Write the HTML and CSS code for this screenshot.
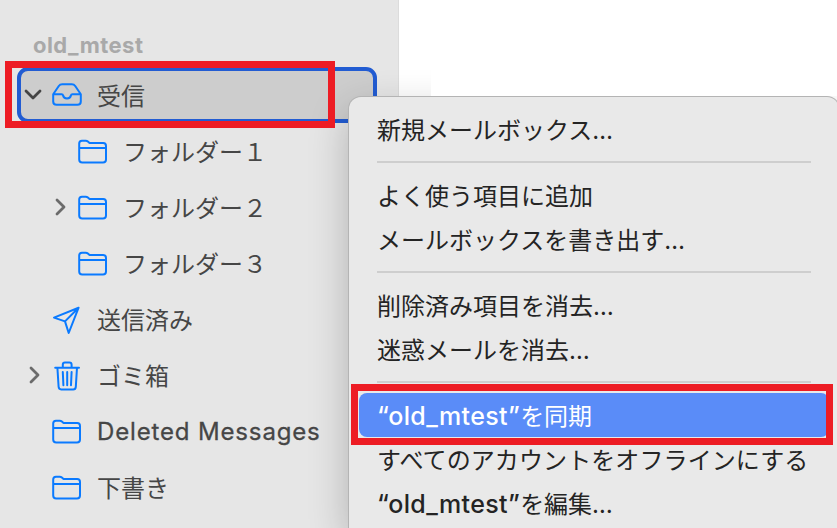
FILE: index.html
```html
<!DOCTYPE html>
<html lang="ja">
<head>
    <meta charset="UTF-8">
    <meta name="viewport" content="width=device-width, initial-scale=1.0">
    <title>メールボックス</title>
    <link rel="stylesheet" href="styles.css">
</head>
<body>

    <svg class="symbols" width="0" height="0">
        <symbol id="folder" viewBox="0 0 30 26">
            <path d="M1.2 20.5V4.5Q1.2 1.7 4 1.7H7.7Q9 1.7 9.9 2.5L10.9 3.4Q11.7 4.1 12.9 4.1H25.2Q28 4.1 28 7.1V20.5Q28 23.4 25 23.4H4.2Q1.2 23.4 1.2 20.5ZM1.2 9H28"/>
        </symbol>
        <symbol id="chevron" viewBox="0 0 12 18">
            <path d="M2 2L9 9L2 16"/>
        </symbol>
    </svg>

    <div class="sidebar">
        <h2 class="account">old_mtest</h2>
        <ul class="mailboxes">
            <li class="mailbox selected">
                <svg class="arrow open"><use href="#chevron"/></svg>
                <svg class="icon" viewBox="0 0 30 26"><path d="M1.2 12.2L6.8 4Q8 2.2 10.2 2.2H19.8Q22 2.2 23.2 4L28.8 12.2V19.4Q28.8 22.8 25.4 22.8H4.6Q1.2 22.8 1.2 19.4ZM1.2 12.2H9.6Q10.8 12.2 11 13.3Q11.6 16.4 15 16.4Q18.4 16.4 19 13.3Q19.2 12.2 20.4 12.2H28.8"/></svg>
                <span class="label">受信</span>
            </li>
            <li class="mailbox child">
                <svg class="icon"><use href="#folder"/></svg>
                <span class="label">フォルダー１</span>
            </li>
            <li class="mailbox child">
                <svg class="arrow"><use href="#chevron"/></svg>
                <svg class="icon"><use href="#folder"/></svg>
                <span class="label">フォルダー２</span>
            </li>
            <li class="mailbox child">
                <svg class="icon"><use href="#folder"/></svg>
                <span class="label">フォルダー３</span>
            </li>
            <li class="mailbox">
                <svg class="icon tall" viewBox="0 0 30 30"><path d="M26.6 2.7L2 12.6L13 16.4L16.7 28ZM26.6 2.7L13 16.4"/></svg>
                <span class="label">送信済み</span>
            </li>
            <li class="mailbox">
                <svg class="arrow"><use href="#chevron"/></svg>
                <svg class="icon tall" viewBox="0 0 30 30"><path d="M3.2 6.8H27M5.4 6.8L6.6 25.8Q6.8 28.4 9.2 28.4H21.2Q23.6 28.4 23.8 25.8L25 6.8M10.8 6.8V3.8Q10.8 1.6 13 1.6H17.4Q19.6 1.6 19.6 3.8V6.8M10.8 11L11.4 24.2M15.2 11V24.2M19.6 11L19 24.2"/></svg>
                <span class="label">ゴミ箱</span>
            </li>
            <li class="mailbox">
                <svg class="icon"><use href="#folder"/></svg>
                <span class="label-latin">Deleted Messages</span>
            </li>
            <li class="mailbox">
                <svg class="icon"><use href="#folder"/></svg>
                <span class="label">下書き</span>
            </li>
        </ul>
    </div>

    <div class="message"></div>

    <ul class="menu">
        <li class="item">新規メールボックス…</li>
        <li class="separator"></li>
        <li class="item">よく使う項目に追加</li>
        <li class="item">メールボックスを書き出す…</li>
        <li class="separator"></li>
        <li class="item">削除済み項目を消去…</li>
        <li class="item">迷惑メールを消去…</li>
        <li class="separator"></li>
        <li class="item active"><span class="name">“old_mtest”</span>を同期</li>
        <li class="item wide">すべてのアカウントをオフラインにする</li>
        <li class="item"><span class="name">“old_mtest”</span>を編集…</li>
    </ul>

    <div class="marker marker-inbox"></div>
    <div class="marker marker-sync"></div>

</body>
</html>
```

FILE: styles.css
```css
* {
    box-sizing: border-box;
}

body {
    position: relative;
    display: flex;
    width: 837px;
    height: 528px;
    margin: 0;
    overflow: hidden;
    background: #fff;
    font-family: Inter, "Noto Sans CJK JP", sans-serif;
    font-size: 24px;
}

ul {
    margin: 0;
    padding: 0;
    list-style: none;
}

.symbols {
    position: absolute;
}

.sidebar {
    width: 399px;
    height: 528px;
    flex-shrink: 0;
    padding: 30px 22px 0 17px;
    background: #e6e6e6;
    border-right: 1px solid #dcdcdc;
}

.account {
    height: 37px;
    margin: 0;
    padding-left: 16px;
    color: #a9a9a9;
    font-size: 22px;
    font-weight: 700;
    letter-spacing: 0.45px;
    line-height: 30px;
}

.mailbox {
    display: flex;
    align-items: center;
    width: 360px;
    height: 56px;
    padding-left: 35px;
    color: #464646;
    white-space: nowrap;
}

.mailbox.child {
    padding-left: 61px;
}

.mailbox.selected {
    padding-left: 31px;
    background: #cdcdcd;
    border: 4px solid #225cd2;
    border-radius: 11px;
}

.label {
    padding-bottom: 2px;
}

.label-latin {
    padding-top: 1px;
    font-weight: 400;
    letter-spacing: 0.85px;
    -webkit-text-stroke: 0.3px #464646;
}

.name {
    font-size: 25px;
    font-weight: 500;
    letter-spacing: 0.35px;
}

.icon {
    width: 30px;
    height: 26px;
    margin-top: 1px;
    margin-right: 15px;
    flex-shrink: 0;
    fill: none;
    stroke: #0a7aff;
    stroke-width: 2;
    stroke-linejoin: round;
    stroke-linecap: round;
}

.icon.tall {
    height: 30px;
}

.selected .icon {
    margin-top: 0;
}

.arrow {
    width: 12px;
    height: 18px;
    margin-left: -23px;
    margin-right: 11px;
    flex-shrink: 0;
    fill: none;
    stroke: #6b6b6b;
    stroke-width: 2.8;
    stroke-linecap: round;
    stroke-linejoin: round;
}

.arrow.open {
    margin-left: -25px;
    margin-right: 13px;
    stroke: #454545;
    transform: rotate(90deg);
}

/* message pane, hides the menu shadow on the white area */
.message {
    position: relative;
    z-index: 2;
    width: 406px;
    height: 96px;
    margin-left: auto;
    background: #fff;
}

.menu {
    position: absolute;
    z-index: 1;
    left: 349px;
    top: 97px;
    width: 490px;
    height: 431px;
    padding: 10px 10px 0;
    background: #e9e9e9;
    border-radius: 12px 12px 0 0;
    box-shadow: 0 0 0 1px #b4b4b4, 0 14px 40px rgba(0, 0, 0, 0.24);
}

.item {
    height: 44px;
    padding-left: 18px;
    padding-top: 3px;
    border-radius: 8px;
    color: #242424;
    line-height: 41px;
    white-space: nowrap;
}

.item.wide {
    letter-spacing: 0.1px;
}

.item.active {
    background: #5a8cf8;
    color: #fff;
}

.separator {
    height: 2px;
    margin: 10px 18px;
    background: #cecece;
}

.marker {
    position: absolute;
    z-index: 3;
    border: 7px solid #ed1c24;
}

.marker-inbox {
    left: 5px;
    top: 61px;
    width: 330px;
    height: 67px;
}

.marker-sync {
    left: 351px;
    top: 384px;
    width: 482px;
    height: 61px;
}
```
